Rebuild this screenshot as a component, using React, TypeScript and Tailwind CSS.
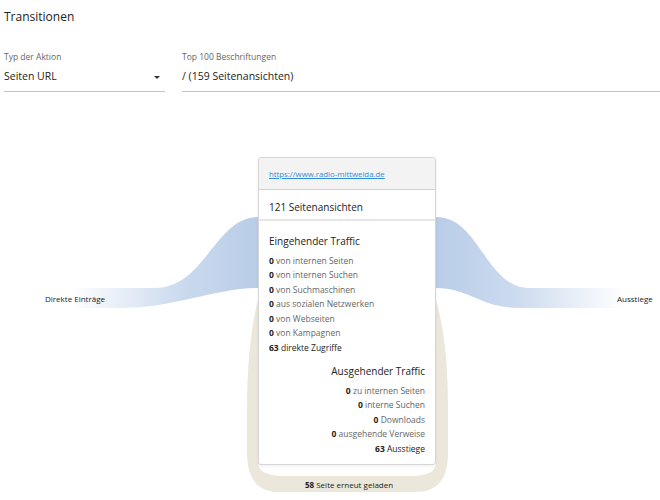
import React from 'react';

const incoming = [
  { n: '0', label: 'von internen Seiten' },
  { n: '0', label: 'von internen Suchen' },
  { n: '0', label: 'von Suchmaschinen' },
  { n: '0', label: 'aus sozialen Netzwerken' },
  { n: '0', label: 'von Webseiten' },
  { n: '0', label: 'von Kampagnen' },
  { n: '63', label: 'direkte Zugriffe', strong: true },
];

const outgoing = [
  { n: '0', label: 'zu internen Seiten' },
  { n: '0', label: 'interne Suchen' },
  { n: '0', label: 'Downloads' },
  { n: '0', label: 'ausgehende Verweise' },
  { n: '63', label: 'Ausstiege', strong: true },
];

function Row({ n, label, strong }: { n: string; label: string; strong?: boolean }) {
  return (
    <div className="h-[14.5px] leading-[14.5px] text-[8.5px] whitespace-nowrap">
      <span className="font-bold text-[#222]">{n}</span>{' '}
      <span className={strong ? 'text-[#222]' : 'text-[#666]'}>{label}</span>
    </div>
  );
}

function Flows() {
  return (
    <svg className="absolute left-0 top-0 pointer-events-none" width={660} height={500} viewBox="0 0 660 500">
      <defs>
        <linearGradient id="inGrad" gradientUnits="userSpaceOnUse" x1="70" y1="0" x2="258" y2="0">
          <stop offset="0" stopColor="#b9cde8" stopOpacity="0" />
          <stop offset="0.6" stopColor="#b9cde8" stopOpacity="0.75" />
          <stop offset="1" stopColor="#b9cde8" stopOpacity="1" />
        </linearGradient>
        <linearGradient id="outGrad" gradientUnits="userSpaceOnUse" x1="436" y1="0" x2="625" y2="0">
          <stop offset="0" stopColor="#b9cde8" stopOpacity="1" />
          <stop offset="0.4" stopColor="#b9cde8" stopOpacity="0.75" />
          <stop offset="1" stopColor="#b9cde8" stopOpacity="0" />
        </linearGradient>
      </defs>
      <path d="M 70 288 L 155 288 C 205 288, 215 217, 258 217 L 258 288 C 215 288, 175 308, 120 308 L 70 308 Z" fill="url(#inGrad)" />
      <path d="M 436 217 C 480 217, 485 288, 530 288 L 625 288 L 625 308 L 520 308 C 480 308, 470 288, 436 288 Z" fill="url(#outGrad)" />
      <path
        d="M 258 300 C 250 330, 247 370, 247 410 L 247 452 C 247 480, 258 492, 280 492 L 415 492 C 437 492, 448 480, 448 452 L 448 410 C 448 370, 445 330, 436 300 Z"
        fill="#ebe7da"
      />
      <path d="M 258 440 L 258 462 C 258 471, 266 476, 285 476 L 410 476 C 429 476, 436 471, 436 462 L 436 440 Z" fill="#ffffff" />
    </svg>
  );
}

export default function App() {
  return (
    <div className="relative w-[660px] h-[500px] overflow-hidden bg-white text-[#222] font-['Open_Sans',sans-serif]">
      <Flows />

      <div className="relative">
        <div className="h-[34px] pl-[4px] flex items-center text-[12px] text-[#222]">Transitionen</div>

        <div className="mt-[13px] flex gap-[17px] pl-[4px]">
          <div className="w-[161px] border-b border-[#c4c4c4] pb-[6px]">
            <div className="h-[20px] leading-[20px] text-[8.5px] text-[#666]">Typ der Aktion</div>
            <div className="h-[18px] pt-[2px] flex items-center justify-between text-[10.5px]">
              <span>Seiten URL</span>
              <span className="mr-[5px] w-0 h-0 border-l-[3.5px] border-r-[3.5px] border-t-[3.5px] border-l-transparent border-r-transparent border-t-[#333]" />
            </div>
          </div>
          <div className="flex-1 border-b border-[#c4c4c4] pb-[6px]">
            <div className="h-[20px] leading-[20px] text-[8.5px] text-[#666]">Top 100 Beschriftungen</div>
            <div className="h-[18px] pt-[2px] flex items-center text-[10.5px]">/ (159 Seitenansichten)</div>
          </div>
        </div>

        <div className="mt-[65px] ml-[258px] w-[178px] bg-white border border-[#d6d6d6] rounded-[3px] shadow-[0_1px_3px_rgba(0,0,0,0.08)]">
          <div className="h-[32px] pt-[2px] bg-[#f3f3f3] border-b border-[#d2d2d2] rounded-t-[3px] px-[10px] flex items-center">
            <span className="text-[7.8px] text-[#2e8fd6] underline">https://www.radio-mittweida.de</span>
          </div>
          <div className="h-[31px] pt-[6px] px-[10px] flex items-center border-b-2 border-[#e6e6e6] text-[10px]">121 Seitenansichten</div>
          <div className="px-[10px] pt-[11px] pb-[8px]">
            <div className="h-[18px] leading-[18px] text-[10px] mb-[3.5px]">Eingehender Traffic</div>
            {incoming.map((r) => (
              <Row key={r.label} {...r} />
            ))}
            <div className="mt-[7px] h-[18px] leading-[18px] text-[10px] text-right mb-[3.5px]">Ausgehender Traffic</div>
            <div className="text-right">
              {outgoing.map((r) => (
                <Row key={r.label} {...r} />
              ))}
            </div>
          </div>
        </div>
      </div>

      <span className="absolute left-[45px] top-[292px] text-[8px] leading-[14px] text-[#222]">Direkte Einträge</span>
      <span className="absolute left-[617px] top-[292px] text-[8px] leading-[14px] text-[#222]">Ausstiege</span>
      <span className="absolute left-[305px] top-[478px] text-[8px] leading-[14px] text-[#222]">
        <b>58</b> Seite erneut geladen
      </span>
    </div>
  );
}
